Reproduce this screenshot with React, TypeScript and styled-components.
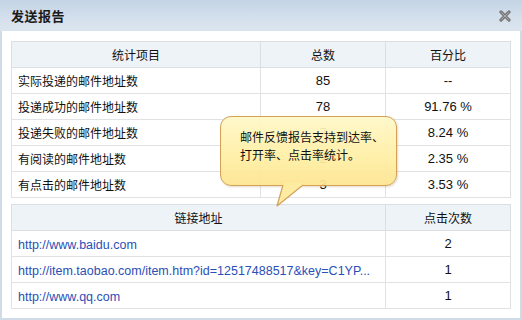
import styled, { createGlobalStyle } from 'styled-components'

const GlobalStyle = createGlobalStyle`
  html, body {
    margin: 0;
    padding: 0;
    background: #fff;
  }
  * {
    box-sizing: border-box;
  }
`

const stats = [
  { name: '实际投递的邮件地址数', total: '85', rate: '--' },
  { name: '投递成功的邮件地址数', total: '78', rate: '91.76 %' },
  { name: '投递失败的邮件地址数', total: '7', rate: '8.24 %' },
  { name: '有阅读的邮件地址数', total: '2', rate: '2.35 %' },
  { name: '有点击的邮件地址数', total: '3', rate: '3.53 %' },
]

const links = [
  { url: 'http://www.baidu.com', clicks: '2' },
  { url: 'http://item.taobao.com/item.htm?id=12517488517&key=C1YP...', clicks: '1' },
  { url: 'http://www.qq.com', clicks: '1' },
]

const CloseIcon = () => (
  <svg width="12" height="12" viewBox="0 0 12 12">
    <path d="M2 2 L10 10 M10 2 L2 10" stroke="#7a7a7a" strokeWidth="3.2" strokeLinecap="round" />
    <path d="M2.5 2.5 L9.5 9.5 M9.5 2.5 L2.5 9.5" stroke="#a8a8a8" strokeWidth="1" strokeLinecap="round" />
  </svg>
)

const App = () => {
  return (
    <>
      <GlobalStyle />
      <Dialog>
        <Header>
          <Title>发送报告</Title>
          <CloseBtn><CloseIcon /></CloseBtn>
        </Header>
        <Body>
          <Table>
            <colgroup>
              <col style={{ width: 249 }} />
              <col style={{ width: 125 }} />
              <col style={{ width: 125 }} />
            </colgroup>
            <thead>
              <tr>
                <Th>统计项目</Th>
                <Th>总数</Th>
                <Th>百分比</Th>
              </tr>
            </thead>
            <tbody>
              {stats.map((s) => (
                <tr key={s.name}>
                  <Td>{s.name}</Td>
                  <Td $center>{s.total}</Td>
                  <Td $center>{s.rate}</Td>
                </tr>
              ))}
            </tbody>
          </Table>

          <Table>
            <colgroup>
              <col style={{ width: 374 }} />
              <col style={{ width: 125 }} />
            </colgroup>
            <thead>
              <tr>
                <Th>链接地址</Th>
                <Th>点击次数</Th>
              </tr>
            </thead>
            <tbody>
              {links.map((l) => (
                <tr key={l.url}>
                  <Td><Link>{l.url}</Link></Td>
                  <Td $center>{l.clicks}</Td>
                </tr>
              ))}
            </tbody>
          </Table>

          <Tip>
            邮件反馈报告支持到达率、<br />
            打开率、点击率统计。
            <TipTail width="30" height="22" viewBox="0 0 30 22">
              <path d="M6 0 L0 21 L26 0" fill="#fdeb9c" stroke="#d09a4c" strokeWidth="1.2" strokeLinejoin="round" />
              <path d="M6.6 -1 L25 -1" stroke="#fdea98" strokeWidth="3" />
            </TipTail>
          </Tip>
        </Body>
      </Dialog>
    </>
  )
}

const Dialog = styled.div`
  width: 522px;
  height: 320px;
  display: flex;
  flex-direction: column;
  font-family: 'Liberation Sans', 'Noto Sans CJK SC', sans-serif;
  font-size: 12px;
  color: #000;
`

const Header = styled.div`
  height: 31px;
  flex: none;
  display: flex;
  align-items: center;
  justify-content: space-between;
  padding: 0 10px 0 11px;
  background: linear-gradient(#c3d4e5, #d4e0ec 60%, #dbe5ef);
`

const Title = styled.div`
  font-family: 'Noto Sans CJK SC', sans-serif;
  font-weight: 700;
  font-size: 13px;
  color: #1a1a1a;
  letter-spacing: 0.5px;
`

const CloseBtn = styled.div`
  display: flex;
  align-items: center;
  justify-content: center;
  width: 14px;
  height: 14px;
  margin-top: 1px;
`

const Body = styled.div`
  position: relative;
  flex: 1;
  background: #fff;
  border: 2px solid #cfdbe7;
  border-top: none;
  padding: 10px 9px 0;
  display: flex;
  flex-direction: column;
  gap: 6px;
`

const Table = styled.table`
  width: 499px;
  border-collapse: collapse;
  table-layout: fixed;
  border: 1px solid #dcdfe2;
`

const Th = styled.th`
  height: 26px;
  padding: 0;
  background: #eef3f7;
  font-family: 'Noto Sans CJK SC', sans-serif;
  font-weight: 400;
  font-size: 12px;
  text-align: center;
  border: 1px solid #dcdfe2;
  color: #111;
`

const Td = styled.td<{ $center?: boolean }>`
  height: 26px;
  padding: 0 ${(p) => (p.$center ? '0' : '6px')};
  text-align: ${(p) => (p.$center ? 'center' : 'left')};
  border: 1px solid #e0e2e4;
  white-space: nowrap;
  overflow: hidden;
  font-size: ${(p) => (p.$center ? '13px' : '12px')};
  font-family: ${(p) => (p.$center ? "'Liberation Sans', sans-serif" : "'Noto Sans CJK SC', 'Liberation Sans', sans-serif")};
  color: #111;
`

const Link = styled.span`
  font-family: 'Liberation Sans', sans-serif;
  font-size: 12.5px;
  color: #2a4fb6;
`

const Tip = styled.div`
  position: absolute;
  left: 218px;
  top: 85px;
  width: 177px;
  height: 70px;
  padding: 11px 0 0 19px;
  border: 1px solid #d09a4c;
  border-radius: 11px;
  background: linear-gradient(#fff8c8, #fff0a6 55%, #fde590);
  opacity: 0.93;
  box-shadow: 1px 1px 2px rgba(150, 110, 40, 0.25);
  font-family: 'Noto Sans CJK SC', sans-serif;
  font-size: 12px;
  line-height: 18px;
  color: #000;
`

const TipTail = styled.svg`
  position: absolute;
  left: 56px;
  top: 68px;
  overflow: visible;
`

export default App
